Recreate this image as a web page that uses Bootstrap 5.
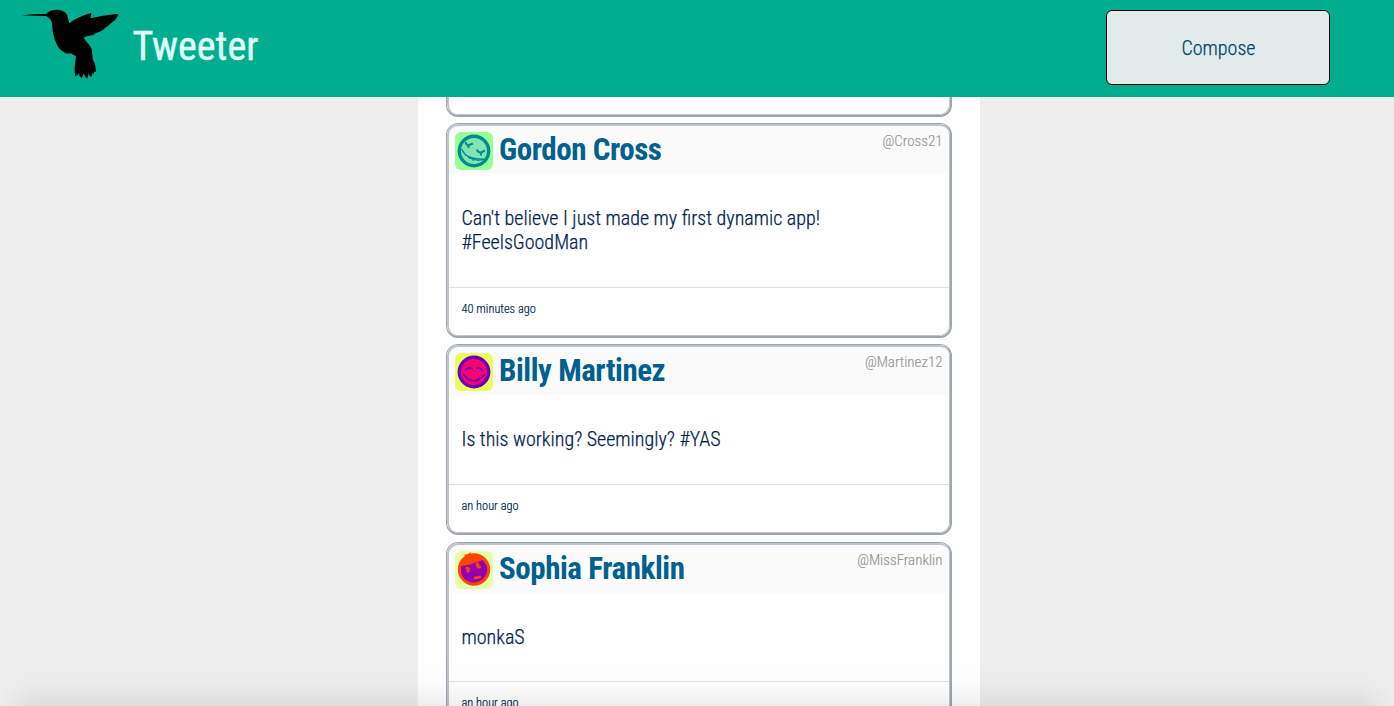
<!DOCTYPE html>
<html lang="en">
<head>
<meta charset="utf-8">
<meta name="viewport" content="width=device-width, initial-scale=1">
<title>Tweeter</title>
<link rel="stylesheet" href="https://cdn.jsdelivr.net/npm/bootstrap@5.3.0/dist/css/bootstrap.min.css">
<style>
  body{font-family:Roboto,"Liberation Sans",sans-serif;font-stretch:75%;font-weight:300;background:#eee;color:#0b2b4b;height:706px;overflow:hidden}
  .topbar{height:97px;background:#00ae8f;padding:10px 64px 0 21px;z-index:2}
  .logo{overflow:visible}
  .brand{color:#e0ffff;font-size:40px;font-weight:400;line-height:48px;margin:13px 0 0 12.4px;-webkit-text-stroke:.4px}
  .compose{width:224px;height:75px;font-size:20px;font-weight:300;font-stretch:75%;color:#00486a;background:#e2eaeb;border:1px solid #000;border-radius:6px;padding-left:13px;-webkit-text-stroke:.25px}
  .feed{width:562px;margin-left:418px;height:609px;padding:0 28px}
  .tweet{width:505.500px;border:1px solid #9fa5ad;border-width:1px 2px 2px 1px;padding:2px 1px 1px 2px;border-radius:12px;margin-bottom:6.5px;background:#fff;overflow:hidden;flex-shrink:0}
  .tweet::after{content:"";position:absolute;inset:0;border:solid #bcc4ce;border-width:2px 1px 1px 2px;border-radius:11px 10px 10px 10px;pointer-events:none}
  .tweet-top{height:48px;background:#fbfbfb;padding:5px 6px 0}
  .avatar{width:38px;height:38px;border-radius:6px;margin-top:1px}
  .name{font-size:31px;letter-spacing:-.44px;font-weight:700;color:#00608f;line-height:36px;margin:1px 0 0 6px}
  .handle{font-size:15px;color:#999;line-height:18px;margin-top:1px;-webkit-text-stroke:.2px}
  .message{font-size:20px;line-height:24px;padding:32px 12.5px 32.8px;color:#052450;-webkit-text-stroke:.25px}
  .stamp{height:48px;border-top:1px solid #dee0e2;font-size:12.4px;line-height:14px;padding:14px 12.5px 0;color:#04294a;-webkit-text-stroke:.2px}
  .previous{height:19.5px;border-top:0;border-radius:0 0 12px 12px}
  .previous::after{border-top:0;border-radius:0 0 10px 10px}
  .shade{height:46px;background:linear-gradient(to bottom,rgba(0,0,0,0),rgba(0,0,0,.015) 55%,rgba(0,0,0,.065));-webkit-mask-image:linear-gradient(to right,transparent,#000 34px,#000 calc(100% - 34px),transparent);z-index:3;pointer-events:none}
</style>
</head>
<body>
<header class="topbar d-flex align-items-start position-relative">
  <svg class="logo" width="99" height="70" viewBox="0 0 99 70" aria-hidden="true"><path d="M1 5.4Q12 3.6 25 4Q27 1.6 30 .7Q33-.5 36.7-.3Q41 0 44 2.3Q46.5 4.5 46.7 7.5L48.3 13.3Q52 10 56.7 8Q64 4.3 70 3Q71 4.5 69 8.3Q82 5.5 95 4Q98 3.6 97.3 5.3Q95 10 90 13.3L87 16L84 18L82 20L78 22L75 23L72 25L67 26L62.7 27.6Q65 32 68 34.5Q71 38 71 41L71.7 49L74.3 55L75 62L73 61.5L73 64L71.5 62.5Q71.5 66 70 67Q67.8 66 67.4 62.7Q67.5 67 66 68.7Q63.5 67 62.7 63Q62 67 60.3 68.3Q58 66.5 58 63Q56.5 66.5 54.3 66.3Q53.3 63 53.7 57L55 45.7Q52 45.3 50.3 43.2Q47 44 44.3 43Q38 40 35.7 34Q33 29 31.8 22L31 13.5Q30 8 25 6Z"/></svg>
  <h1 class="brand">Tweeter</h1>
  <button class="compose btn ms-auto">Compose</button>
</header>
<main class="feed bg-white d-flex flex-column">
  <div class="tweet previous position-relative"></div>
  <article class="tweet position-relative">
    <div class="tweet-top d-flex">
      <svg class="avatar" viewBox="0 0 38 38"><path fill="#9f9" d="M0 0h38v38H0z"/><circle cx="19" cy="19" r="14.7" fill="#80e5b2" stroke="#008c8c" stroke-width="3.4"/><path d="M10.500 10q1 4 3.500 3l4-1.500M13.500 13v3M22 17.500q1 3.500 4 3l4-2M26 20.500v3" fill="none" stroke="#008c8c" stroke-width="2"/><path d="M6.500 17Q11 28 30.500 27Q15 32 6.500 17" fill="#80e5b2" stroke="#008c8c" stroke-width="1.200"/><path d="M11 22l-1 2M15 25l-1 2M19 26l-1 3M23 26v3" stroke="#008c8c"/></svg>
      <h2 class="name">Gordon Cross</h2><span class="handle ms-auto">@Cross21</span>
    </div>
    <div class="message">Can't believe I just made my first dynamic app!<br>#FeelsGoodMan</div>
    <div class="stamp">40 minutes ago</div>
  </article>
  <article class="tweet position-relative">
    <div class="tweet-top d-flex">
      <svg class="avatar" viewBox="0 0 38 38"><path fill="#eaff5e" d="M0 0h38v38H0z"/><circle cx="19" cy="19" r="14.7" fill="#ff006e" stroke="#60b" stroke-width="3.4"/><path d="M10.500 18q2-5.500 7.500-2M21 15.500q5-2 7 3M8.500 21q9 13 21 1" fill="none" stroke="#60b" stroke-width="2"/></svg>
      <h2 class="name">Billy Martinez</h2><span class="handle ms-auto">@Martinez12</span>
    </div>
    <div class="message">Is this working? Seemingly? #YAS</div>
    <div class="stamp">an hour ago</div>
  </article>
  <article class="tweet position-relative">
    <div class="tweet-top d-flex">
      <svg class="avatar" viewBox="0 0 38 38"><path fill="#e8ffa8" d="M0 0h38v38H0z"/><circle cx="19" cy="18.500" r="16.200" fill="#ff4600"/><path d="M8 4l5-1 3-2-1 3-4 1" fill="#ff4600"/><path d="M6 15Q17 14 27.500 9Q34 15 31.500 23Q27 32 18 31.500Q9 31 6 22Z" fill="#9400b0"/><path d="M12 17q2 0 1 3M22.500 13q0 3 2 3" fill="none" stroke="#ff4600" stroke-width="3.200" stroke-linecap="round"/><path d="M20 27l5-1" fill="none" stroke="#ff4600" stroke-width="2.500" stroke-linecap="round"/></svg>
      <h2 class="name">Sophia Franklin</h2><span class="handle ms-auto">@MissFranklin</span>
    </div>
    <div class="message">monkaS</div>
    <div class="stamp">an hour ago</div>
  </article>
</main>
<div class="shade fixed-bottom"></div>
<script src="https://cdn.jsdelivr.net/npm/bootstrap@5.3.0/dist/js/bootstrap.bundle.min.js"></script>
</body>
</html>
